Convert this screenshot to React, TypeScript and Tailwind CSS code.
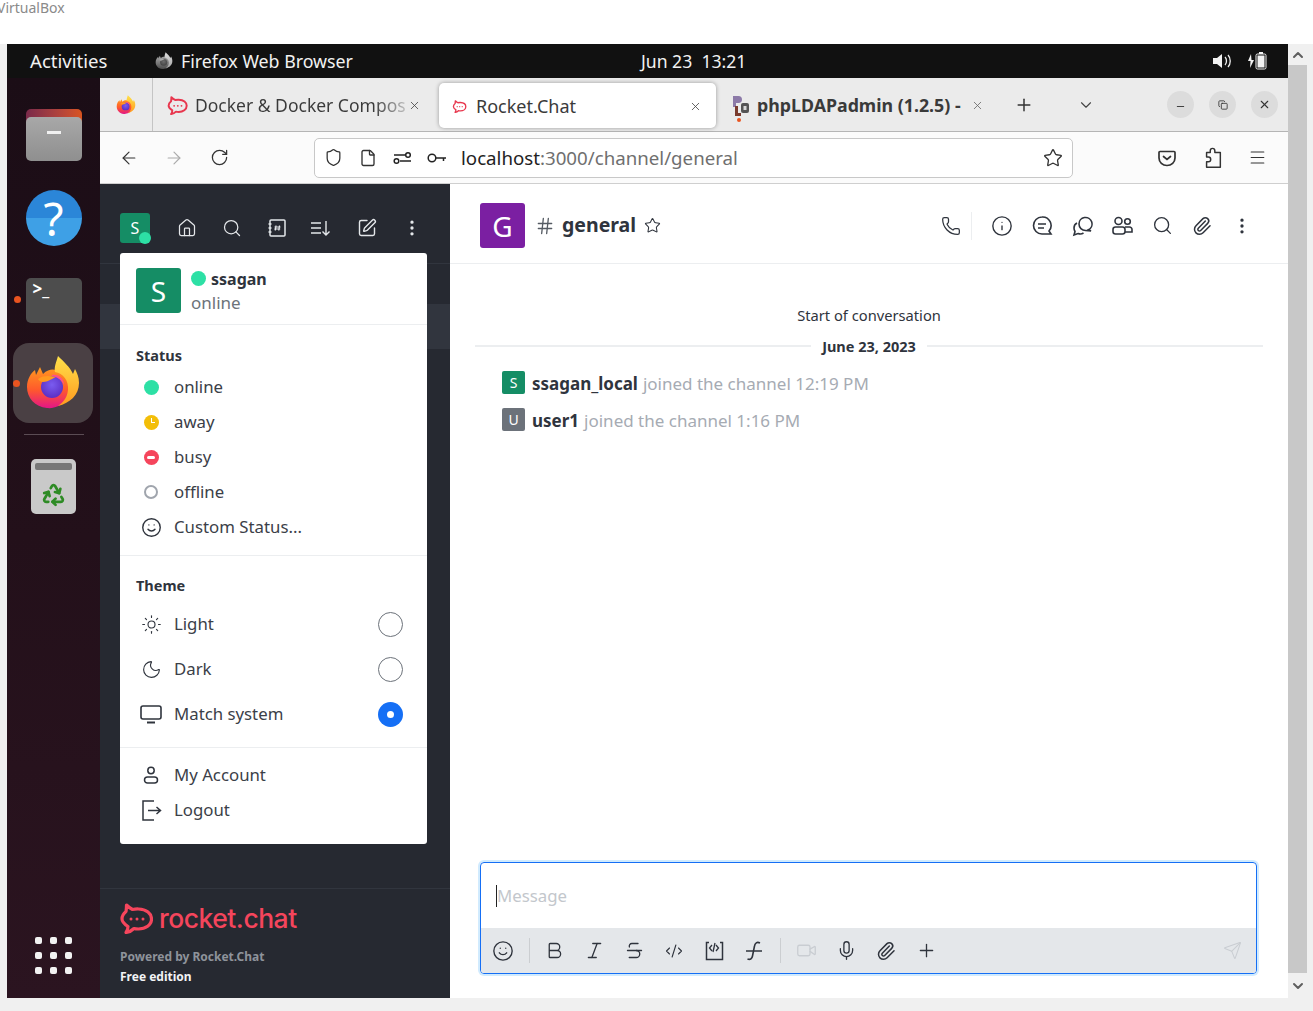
import type { ReactNode } from "react";
import {
  ArrowLeft,
  ArrowRight,
  ChevronDown,
  ChevronUp,
  CodeXml,
  EllipsisVertical,
  House,
  Info,
  Italic,
  Bold,
  Menu,
  Mic,
  Minus,
  Moon,
  Paperclip,
  Phone,
  Plus,
  Recycle,
  RotateCw,
  Search,
  Send,
  Shield,
  Smile,
  SquarePen,
  Star,
  Strikethrough,
  Sun,
  Video,
  X,
  Hash,
  File,
  Copy,
} from "lucide-react";

const Ubuntuish = "font-['Noto_Sans',sans-serif]";

const RocketMark = ({ className }: { className?: string }) => (
  <svg viewBox="1 0 32 31" className={className} fill="none">
    <path
      d="M7 2c2 2 4 3.500 6 4.500 2-.4 4-.6 6-.5 8 .3 13 4.600 13 10 0 6-6 10-13 10-1.500 0-3 0-4.500-.5-2 2-5 3.500-8 4 1.500-2 2-4 2-6-3-2-6-4.500-6-7.500 0-3 1.500-5.500 4-7.500C7 6 7 4 7 2z"
      stroke="currentColor"
      strokeWidth="3.200"
      strokeLinejoin="round"
    />
    <circle cx="11.500" cy="16" r="1.500" fill="currentColor" />
    <circle cx="17.500" cy="16" r="1.500" fill="currentColor" />
    <circle cx="23.500" cy="16" r="1.500" fill="currentColor" />
  </svg>
);

const FirefoxLogo = ({ className }: { className?: string }) => (
  <svg viewBox="0 0 54 56" className={className}>
    <defs>
      <linearGradient id="ffBody" x1="0" y1="0" x2="0" y2="1">
        <stop offset="0" stopColor="#ff9a1f" />
        <stop offset="0.55" stopColor="#ff5a2b" />
        <stop offset="1" stopColor="#e31587" />
      </linearGradient>
      <linearGradient id="ffTop" x1="0" y1="0" x2="0" y2="1">
        <stop offset="0" stopColor="#ffe14a" />
        <stop offset="1" stopColor="#ff9a1f" />
      </linearGradient>
      <radialGradient id="ffGlobe" cx="0.5" cy="0.4" r="0.6">
        <stop offset="0" stopColor="#7a5cf0" />
        <stop offset="1" stopColor="#5b2fc4" />
      </radialGradient>
    </defs>
    <path
      d="M14 12 L17 19 C22 14 27 14 30 15 C44 18 47 30 44 38 C40 50 28 54 21 53 C9 52 1 43 1 32 C1 24 5 18 9 15 L10 20 Z"
      fill="url(#ffBody)"
    />
    <path
      d="M32 1 C30 8 28 12 29 17 C37 18 43 26 42 35 C41 44 36 48 32 51 C44 48 53 40 53 28 C53 22 51 18 49 14 L47 19 C44 12 38 7 32 1 Z"
      fill="url(#ffTop)"
    />
    <circle cx="26" cy="32" r="11" fill="url(#ffGlobe)" />
    <path d="M12 24 C18 20 24 21 30 22 C25 24 22 27 17 27 C15 27 13 26 12 24 Z" fill="#ff9a1f" />
    <path d="M26 20 C33 19 38 24 38 30 C35 24 31 22 26 21 Z" fill="#ff4f8b" />
  </svg>
);

// blurry phpLDAPadmin favicon, it is only a picture of letters in the reference
const PhpLdapFavicon = () => (
  <svg width="18" height="28" viewBox="0 0 18 28">
    <path d="M1 1h5.500a3 3 0 0 1 0 7H4v4H1z" fill="#8c7aa8" />
    <path d="M3 11h3v7h3v3H3z" fill="#7a3b2e" />
    <rect x="9" y="8" width="8" height="10" rx="2" fill="#555555" />
    <rect x="11.500" y="11" width="3" height="4" fill="#d8d8d8" />
    <circle cx="7" cy="25" r="2" fill="#e95420" />
  </svg>
);

const DirectoryIcon = ({ size = 20 }: { size?: number }) => (
  <svg width={size} height={size} viewBox="0 0 20 20" fill="none" stroke="currentColor" strokeWidth="1.500">
    <rect x="3" y="2" width="15" height="16" rx="1" />
    <path d="M1.500 6h3M1.500 10h3M1.500 14h3" />
    <path d="M9 7.500l-.7 5M12.500 7.500l-.7 5M7.500 9h6M7.200 11h6" strokeWidth="1.200" />
  </svg>
);

const SortIcon = () => (
  <svg width="22" height="20" viewBox="0 0 22 20" fill="none" stroke="currentColor" strokeWidth="1.400">
    <path d="M1 5h10M1 10h10M1 15h10" />
    <path d="M16 3v14M12.500 13.500L16 17l3.500-3.500" />
  </svg>
);

const ParamsIcon = () => (
  <svg width="20" height="16" viewBox="0 0 20 16" fill="none" stroke="#222" strokeWidth="1.500">
    <path d="M1 5h11M7 11h11" />
    <circle cx="15" cy="5" r="2.300" />
    <circle cx="3.500" cy="11" r="2.300" />
  </svg>
);

const KeyIcon = () => (
  <svg width="20" height="12" viewBox="0 0 20 12" fill="none" stroke="#222" strokeWidth="1.500">
    <circle cx="5" cy="6" r="3.800" />
    <path d="M9 6h10M16.500 6v3" />
  </svg>
);

const PuzzleIcon = () => (
  <svg width="22" height="24" viewBox="0 0 24 24" fill="none" stroke="#333" strokeWidth="1.600" strokeLinejoin="round">
    <path d="M9 6V4a2.500 2.500 0 0 1 5 0v2h6v16H5v-6h2a2.500 2.500 0 0 0 0-5H5V6z" />
  </svg>
);

const PocketIcon = () => (
  <svg width="20" height="20" viewBox="0 0 20 20" fill="none" stroke="#333" strokeWidth="1.700">
    <path d="M3 3.500h14a1 1 0 0 1 1 1V10a8 7.500 0 0 1-16 0V4.500a1 1 0 0 1 1-1z" />
    <path d="M6.500 8.500L10 11.500l3.500-3" strokeLinecap="round" />
  </svg>
);

const ThreadIcon = () => (
  <svg width="22" height="22" viewBox="0 0 22 22" fill="none" stroke="#2f343d" strokeWidth="1.600">
    <path d="M11 2a8.500 8.500 0 1 0 0 17h9l-2-3a8.500 8.500 0 0 0-7-14z" />
    <path d="M7 9h8M7 13h6" />
  </svg>
);

const DiscussionIcon = () => (
  <svg width="22" height="22" viewBox="0 0 22 22" fill="none" stroke="#2f343d" strokeWidth="1.600">
    <path d="M8 9a6.500 6.500 0 1 1 9.500 5.700L20 16l-5.500-.5A6.500 6.500 0 0 1 8 9z" />
    <path d="M6 8a5.500 5.500 0 0 0-3 5c0 1.500.4 2.500 1 3.500L3 20l4-1.500c2 .8 4 .5 5.500-.5" />
  </svg>
);

const MembersIcon = () => (
  <svg width="22" height="22" viewBox="0 0 22 22" fill="none" stroke="#2f343d" strokeWidth="1.600">
    <circle cx="7.500" cy="6" r="3.500" />
    <circle cx="16.500" cy="6.500" r="2.800" />
    <rect x="2" y="12" width="12" height="7" rx="2.500" />
    <path d="M14 12h4.500a2.500 2.500 0 0 1 2.500 2.500V17h-7" />
  </svg>
);

const CodeBlockIcon = () => (
  <svg width="22" height="22" viewBox="0 0 22 22" fill="none" stroke="#2f343d" strokeWidth="1.500">
    <path d="M6 2.500H3.500v17h16v-17H17" />
    <path d="M9 5L6.500 8 9 11M13 5l2.500 3L13 11M12 3l-2 9" strokeWidth="1.300" />
  </svg>
);

const FormulaIcon = () => (
  <svg width="20" height="22" viewBox="0 0 20 22" fill="none" stroke="#2f343d" strokeWidth="1.600">
    <path d="M16 3c-3-1.500-5 0-5.500 3L8.500 16c-.5 3-2.500 4-5 3" />
    <path d="M2 11h16" />
  </svg>
);

const MonitorIcon = () => (
  <svg width="22" height="22" viewBox="0 0 22 22" fill="none" stroke="#2f343d" strokeWidth="1.600">
    <rect x="1" y="3" width="20" height="13" rx="2" />
    <path d="M7 19.500h8" strokeWidth="2" />
  </svg>
);

const AccountIcon = () => (
  <svg width="20" height="20" viewBox="0 0 20 20" fill="none" stroke="#2f343d" strokeWidth="1.500">
    <circle cx="10" cy="5.500" r="3.200" />
    <rect x="3.500" y="12" width="13" height="6" rx="3" />
  </svg>
);

const LogoutIcon = () => (
  <svg width="21" height="23" viewBox="0 0 21 23" fill="none" stroke="#2f343d" strokeWidth="1.500">
    <path d="M13 2H2v19h11" />
    <path d="M7 11.500h12M15.500 8l4 3.500-4 3.500" />
  </svg>
);

const StatusRow = ({ icon, label }: { icon: ReactNode; label: string }) => (
  <div className="flex h-[35px] items-center pt-[1px]">
    <span className="flex w-[54px] shrink-0 justify-center pl-[8px]">{icon}</span>
    <span className="pt-[1px] text-[16.800px] leading-none text-[#3b4048]">{label}</span>
  </div>
);

const ThemeRow = ({ icon, label, selected }: { icon: ReactNode; label: string; selected?: boolean }) => (
  <div className="flex h-[45px] items-center pr-[24px] pt-[1px]">
    <span className="flex w-[54px] shrink-0 justify-center pl-[8px] text-[#2f343d]">{icon}</span>
    <span className="flex-1 pt-[1px] text-[16.800px] leading-none text-[#3b4048]">{label}</span>
    {selected ? (
      <span className="flex h-[25px] w-[25px] items-center justify-center rounded-full bg-[#156ff5]">
        <span className="h-[7px] w-[7px] rounded-full bg-white" />
      </span>
    ) : (
      <span className="h-[25px] w-[25px] rounded-full border border-[#6c727a]" />
    )}
  </div>
);

const SystemMessage = ({ initial, color, name, time }: { initial: string; color: string; name: string; time: string }) => (
  <div className="flex h-[37px] items-center pl-[52px]">
    <span className={`flex h-[23px] w-[23px] items-center justify-center rounded-[2px] text-[14px] leading-none text-white ${color}`}>
      {initial}
    </span>
    <span className="ml-[7px] pt-[2px] text-[17px] font-bold leading-none text-[#2f343d]">{name}</span>
    <span className="ml-[5px] pt-[2px] text-[17px] leading-none text-[#a6abb3]">joined the channel {time}</span>
  </div>
);

const TopBar = () => (
  <div className="flex h-[34px] items-center bg-[#111111] text-[18px] text-[#f2f2f2]">
    <span className="ml-[23px] w-[125px] text-[18.600px]">Activities</span>
    <FirefoxLogo className="h-[18px] w-[18px] grayscale" />
    <span className="ml-[8px] w-[460px] text-[17.800px]">Firefox Web Browser</span>
    <span className="whitespace-pre text-[17.600px]">Jun 23  13:21</span>
    <span className="ml-auto flex items-center gap-[15px] pr-[21px]">
      <svg width="20" height="18" viewBox="0 0 20 18" fill="#f2f2f2">
        <path d="M1 6h4l5-4v14l-5-4H1z" />
        <path d="M13 5c2 2 2 6 0 8M16 3c3 3 3 9 0 12" stroke="#f2f2f2" strokeWidth="1.300" fill="none" />
      </svg>
      <svg width="20" height="20" viewBox="0 0 20 20" fill="#f2f2f2">
        <path d="M4 3L1 10h2.500L3 17l4-8H4.500z" />
        <rect x="9" y="3" width="10" height="15" rx="1.500" fill="none" stroke="#f2f2f2" />
        <rect x="10.500" y="4.500" width="7" height="12" />
        <rect x="12" y="1" width="4" height="2" />
      </svg>
    </span>
  </div>
);

const Dock = () => (
  <aside className="relative flex w-[93px] shrink-0 flex-col items-center bg-gradient-to-b from-[#1b0d16] via-[#23101a] to-[#2b1420]">
    <div className="relative mt-[31px] h-[52px] w-[56px]">
      <div className="absolute inset-x-0 top-0 h-[28px] rounded-[5px] bg-gradient-to-r from-[#7a2a4a] to-[#d9541e]" />
      <div className="absolute inset-x-0 bottom-0 flex h-[44px] justify-center rounded-[5px] bg-gradient-to-b from-[#a8a8a8] to-[#8f8f8f]">
        <span className="mt-[14px] h-[3px] w-[14px] bg-[#f0f0f0]" />
      </div>
    </div>
    <div className="mt-[29px] flex h-[56px] w-[56px] items-center justify-center rounded-full bg-[linear-gradient(#2b86d8_50%,#3ea0e6_50%)] text-[46px] leading-none text-white">
      ?
    </div>
    <div className="relative mt-[32px] h-[45px] w-[56px] rounded-[5px] bg-[#4d4d4d] pl-[7px] pt-[1px] text-[17px] font-bold leading-[20px] text-white">
      &gt;_
      <span className="absolute left-[-12px] top-[18px] h-[7px] w-[7px] rounded-full bg-[#e95420]" />
    </div>
    <div className="relative -ml-[2px] mt-[20px] flex h-[80px] w-[80px] items-center justify-center rounded-[16px] bg-[#4a4044]">
      <FirefoxLogo className="ml-[1px] h-[56px] w-[54px]" />
      <span className="absolute left-0 top-[37px] h-[7px] w-[7px] rounded-full bg-[#e95420]" />
    </div>
    <div className="mt-[11px] h-px w-[60px] bg-[#5b4c54]" />
    <div className="mt-[24px] flex h-[55px] w-[45px] flex-col items-center rounded-[5px] bg-[#c9c9c9] pt-[4px]">
      <span className="h-[7px] w-[37px] rounded-[2px] bg-[#777777]" />
      <Recycle size={25} className="mt-[12px] text-[#2e8b25]" strokeWidth={2.600} />
    </div>
    <div className="mt-auto mb-[24px] grid grid-cols-3 gap-[8px]">
      {Array.from({ length: 9 }).map((_, i) => (
        <span key={i} className="h-[7px] w-[7px] rounded-[2px] bg-[#f2f2f2]" />
      ))}
    </div>
  </aside>
);

const TabBar = () => (
  <div className="flex h-[54px] items-stretch border-b border-[#b5b5b5] bg-[#ebebeb]">
    <div className="flex w-[53px] items-center justify-center border-r border-[#c4c4c4]">
      <FirefoxLogo className="h-[20px] w-[20px]" />
    </div>
    <div className="flex w-[286px] items-center pl-[14px] pt-[2px]">
      <RocketMark className="h-[19px] w-[21px] text-[#e8374e]" />
      <span className="ml-[7px] w-[210px] whitespace-nowrap bg-gradient-to-r from-[#3a3a3a] from-[85%] to-[#bdbdbd] bg-clip-text text-[17.500px] text-transparent">
        Docker &amp; Docker Compos
      </span>
      <X size={13} className="ml-[3px] text-[#444]" strokeWidth={1.500} />
    </div>
    <div className="mt-[5px] flex h-[45px] w-[277px] items-center rounded-[5px] bg-white pl-[13px] pr-[14px] pt-[1px] text-[18px] text-[#3a3a3a] shadow-[0_0_4px_rgba(0,0,0,0.35)]">
      <RocketMark className="h-[13px] w-[15px] text-[#e8374e]" />
      <span className="ml-[9px] flex-1">Rocket.Chat</span>
      <X size={13} className="text-[#444]" strokeWidth={1.500} />
    </div>
    <div className="flex w-[286px] items-center pl-[16px] pt-[2px] text-[#3a3a3a]">
      <span className="mt-[6px] h-[28px]">
        <PhpLdapFavicon />
      </span>
      <span className="ml-[7px] w-[205px] whitespace-nowrap text-[17.800px] font-bold">phpLDAPadmin (1.2.5) -</span>
      <X size={13} className="ml-[9px] text-[#666]" strokeWidth={1.500} />
    </div>
    <div className="flex w-[43px] items-center justify-center">
      <Plus size={20} className="text-[#333]" strokeWidth={1.800} />
    </div>
    <div className="ml-[20px] flex w-[42px] items-center justify-center">
      <ChevronDown size={18} className="text-[#444]" strokeWidth={1.500} />
    </div>
    <div className="ml-[60px] flex items-center gap-[15px]">
      <span className="flex h-[27px] w-[27px] items-center justify-center rounded-full bg-[#dcdcdc]">
        <Minus size={11} className="mt-[4px] text-[#333]" />
      </span>
      <span className="flex h-[27px] w-[27px] items-center justify-center rounded-full bg-[#dcdcdc]">
        <Copy size={10} className="text-[#333]" />
      </span>
      <span className="flex h-[27px] w-[27px] items-center justify-center rounded-full bg-[#dcdcdc]">
        <X size={13} className="text-[#333]" />
      </span>
    </div>
  </div>
);

const NavBar = () => (
  <div className="flex h-[52px] items-center border-b border-[#cfcfcf] bg-[#fbfbfb] text-[#333]">
    <ArrowLeft size={20} className="ml-[19px]" strokeWidth={1.400} />
    <ArrowRight size={20} className="ml-[25px] text-[#aaa]" strokeWidth={1.400} />
    <RotateCw size={19} className="ml-[26px]" strokeWidth={1.600} />
    <div className="ml-[85px] flex h-[40px] w-[759px] items-center rounded-[5px] border border-[#c8c8c8] bg-white pl-[9px] pr-[9px]">
      <Shield size={19} strokeWidth={1.600} />
      <File size={18} className="ml-[16px]" strokeWidth={1.800} />
      <span className="ml-[16px]">
        <ParamsIcon />
      </span>
      <span className="ml-[14px]">
        <KeyIcon />
      </span>
      <span className="ml-[14px] pt-[1px] text-[18.700px] leading-none text-[#222]">
        localhost<span className="text-[#6f6f6f]">:3000/channel/general</span>
      </span>
      <Star size={20} className="ml-auto" strokeWidth={1.600} />
    </div>
    <span className="ml-[84px]">
      <PocketIcon />
    </span>
    <span className="ml-[25px]">
      <PuzzleIcon />
    </span>
    <Menu size={19} className="ml-[24px]" strokeWidth={1.300} />
  </div>
);

const UserPopover = () => (
  <div className="absolute left-[20px] top-[69px] h-[591px] w-[307px] rounded-[3px] bg-white">
    <div className="flex h-[72px] items-start border-b border-[#eceef0] pl-[16px] pt-[15px]">
      <span className="flex h-[45px] w-[45px] items-center justify-center rounded-[3px] bg-[#158d65] text-[28px] leading-none text-white">
        S
      </span>
      <div className="ml-[10px]">
        <div className="flex h-[21px] items-center">
          <span className="h-[15px] w-[15px] rounded-full bg-[#2de0a5]" />
          <span className="ml-[5px] text-[16px] font-bold leading-none text-[#2f343d]">ssagan</span>
        </div>
        <div className="mt-[5px] text-[17px] leading-none text-[#6c737a]">online</div>
      </div>
    </div>
    <div className="h-[231px] border-b border-[#eceef0] pt-[23px]">
      <div className="h-[21px] pl-[16px] text-[14.500px] font-bold leading-none text-[#2f343d]">Status</div>
      <StatusRow icon={<span className="h-[15px] w-[15px] rounded-full bg-[#2de0a5]" />} label="online" />
      <StatusRow
        icon={
          <span className="relative h-[15px] w-[15px] rounded-full bg-[#f3be08]">
            <span className="absolute left-[7px] top-[3px] h-[5px] w-[4px] rounded-bl-[1px] border-b-[1.500px] border-l-[1.500px] border-white" />
          </span>
        }
        label="away"
      />
      <StatusRow
        icon={
          <span className="flex h-[15px] w-[15px] items-center justify-center rounded-full bg-[#f5455c]">
            <span className="h-[3px] w-[8px] rounded-full bg-white" />
          </span>
        }
        label="busy"
      />
      <StatusRow icon={<span className="h-[14px] w-[14px] rounded-full border-2 border-[#a0a5ad]" />} label="offline" />
      <StatusRow icon={<Smile size={21} strokeWidth={1.600} className="text-[#2f343d]" />} label="Custom Status..." />
    </div>
    <div className="h-[192px] border-b border-[#eceef0] pt-[22px]">
      <div className="h-[23px] pl-[16px] text-[14.500px] font-bold leading-none text-[#2f343d]">Theme</div>
      <ThemeRow icon={<Sun size={21} strokeWidth={1.300} />} label="Light" />
      <ThemeRow icon={<Moon size={21} strokeWidth={1.300} />} label="Dark" />
      <ThemeRow icon={<MonitorIcon />} label="Match system" selected />
    </div>
    <div className="pt-[9px]">
      <StatusRow icon={<AccountIcon />} label="My Account" />
      <StatusRow icon={<LogoutIcon />} label="Logout" />
    </div>
  </div>
);

const Sidebar = () => (
  <aside className="relative flex w-[350px] shrink-0 flex-col bg-[#262931]">
    <div className="flex h-[80px] items-center border-b border-[#31353e] pl-[20px] pt-[8px] text-[#e4e7ea]">
      <span className="relative flex h-[30px] w-[30px] items-center justify-center rounded-[3px] bg-[#158d65] text-[16px] leading-none text-white">
        S
        <span className="absolute bottom-[-1px] right-[-1px] h-[12px] w-[12px] rounded-full bg-[#2de0a5]" />
      </span>
      <House size={20} className="ml-[27px]" strokeWidth={1.500} />
      <Search size={20} className="ml-[25px]" strokeWidth={1.500} />
      <span className="ml-[25px]">
        <DirectoryIcon />
      </span>
      <span className="ml-[23px]">
        <SortIcon />
      </span>
      <SquarePen size={20} className="ml-[25px]" strokeWidth={1.700} />
      <EllipsisVertical size={20} className="ml-[25px]" strokeWidth={2} />
    </div>
    <div className="mt-[40px] h-[45px] bg-[#31353e]" />
    <UserPopover />
    <div className="mt-auto h-[110px] border-t border-[#31353e] pl-[20px] pt-[13px]">
      <div className="flex h-[32px] items-center">
        <RocketMark className="h-[31px] w-[33px] text-[#f5455c]" />
        <span className="ml-[6px] font-['Inter',sans-serif] text-[26.500px] font-medium leading-none tracking-[-0.5px] text-[#f5455c]">
          rocket.chat
        </span>
      </div>
      <div className="mt-[13px] text-[12px] font-bold leading-[20px] text-[#8e939b]">Powered by Rocket.Chat</div>
      <div className="text-[12px] font-bold leading-[20px] text-[#f2f3f5]">Free edition</div>
    </div>
  </aside>
);

const ChatHeader = () => (
  <header className="flex h-[80px] items-center border-b border-[#eceef0] pl-[30px] pr-[26px] pt-[4px] text-[#2f343d]">
    <span className="flex h-[45px] w-[45px] items-center justify-center rounded-[3px] bg-[#7b1fa2] text-[28px] leading-none text-white">
      G
    </span>
    <Hash size={20} className="ml-[10px] text-[#555b63]" strokeWidth={1.600} />
    <span className="-mt-[2px] ml-[7px] text-[19.500px] font-bold leading-none">general</span>
    <Star size={17} className="ml-[8px]" strokeWidth={1.500} />
    <div className="ml-auto flex items-center">
      <Phone size={20} strokeWidth={1.500} />
      <span className="mx-[10px] h-[28px] w-px bg-[#eceef0]" />
      <span className="flex w-[40px] justify-center">
        <Info size={22} strokeWidth={1.500} />
      </span>
      <span className="flex w-[40px] justify-center">
        <ThreadIcon />
      </span>
      <span className="flex w-[40px] justify-center">
        <DiscussionIcon />
      </span>
      <span className="flex w-[40px] justify-center">
        <MembersIcon />
      </span>
      <span className="flex w-[40px] justify-center">
        <Search size={21} strokeWidth={1.500} />
      </span>
      <span className="flex w-[40px] justify-center">
        <Paperclip size={20} strokeWidth={1.800} />
      </span>
      <span className="flex w-[40px] justify-center">
        <EllipsisVertical size={20} strokeWidth={2} />
      </span>
    </div>
  </header>
);

const Composer = () => (
  <div className="mb-[24px] ml-[30px] mr-[31px] mt-auto h-[112px] overflow-hidden rounded-[4px] border border-[#156ff5] shadow-[0_0_0_2px_#d1ebfe]">
    <div className="flex h-[65px] items-center pl-[15px]">
      <span className="h-[22px] w-px bg-[#222]" />
      <span className="pt-[2px] text-[16.800px] leading-none text-[#c3c7cc]">Message</span>
    </div>
    <div className="flex h-[45px] items-center bg-[#e4e7ea] text-[#2f343d]">
      <span className="flex w-[44px] justify-center">
        <Smile size={22} strokeWidth={1.500} />
      </span>
      <span className="ml-[4px] h-[25px] w-px bg-[#cbced1]" />
      <span className="ml-[4px] flex w-[40px] justify-center">
        <Bold size={21} strokeWidth={1.500} />
      </span>
      <span className="flex w-[40px] justify-center">
        <Italic size={21} strokeWidth={1.500} />
      </span>
      <span className="flex w-[40px] justify-center">
        <Strikethrough size={21} strokeWidth={1.500} />
      </span>
      <span className="flex w-[40px] justify-center">
        <CodeXml size={18} strokeWidth={1.500} />
      </span>
      <span className="flex w-[40px] justify-center">
        <CodeBlockIcon />
      </span>
      <span className="flex w-[40px] justify-center">
        <FormulaIcon />
      </span>
      <span className="ml-[6px] h-[25px] w-px bg-[#cbced1]" />
      <span className="ml-[5px] flex w-[40px] justify-center text-[#c9cdd2]">
        <Video size={21} strokeWidth={1.500} />
      </span>
      <span className="flex w-[40px] justify-center">
        <Mic size={21} strokeWidth={1.500} />
      </span>
      <span className="flex w-[40px] justify-center">
        <Paperclip size={20} strokeWidth={1.800} />
      </span>
      <span className="flex w-[40px] justify-center">
        <Plus size={21} strokeWidth={1.500} />
      </span>
      <Send size={19} className="ml-auto mr-[14px] text-[#c9cdd2]" strokeWidth={1.300} />
    </div>
  </div>
);

const ChatPanel = () => (
  <main className="flex min-w-0 flex-1 flex-col bg-white">
    <ChatHeader />
    <div className="pt-[44px] text-center text-[14.700px] leading-none text-[#2f343d]">Start of conversation</div>
    <div className="mx-[25px] mt-[16px] flex items-center">
      <span className="h-[2px] flex-1 bg-[#eceef0]" />
      <span className="px-[11px] text-[14.500px] font-bold leading-none text-[#2f343d]">June 23, 2023</span>
      <span className="h-[2px] flex-1 bg-[#eceef0]" />
    </div>
    <div className="mt-[11px]">
      <SystemMessage initial="S" color="bg-[#158d65]" name="ssagan_local" time="12:19 PM" />
      <SystemMessage initial="U" color="bg-[#6c727a]" name="user1" time="1:16 PM" />
    </div>
    <Composer />
  </main>
);

const Scrollbar = () => (
  <div className="flex w-[25px] shrink-0 flex-col bg-[#f0f0f0] pr-[6px]">
    <div className="flex h-[21px] items-center justify-center text-[#5f5f5f]">
      <ChevronUp size={16} strokeWidth={3} />
    </div>
    <div className="h-[908px] bg-[#c8c8c8]" />
    <div className="flex h-[25px] items-center justify-center text-[#5f5f5f]">
      <ChevronDown size={16} strokeWidth={3} />
    </div>
  </div>
);

export default function App() {
  return (
    <div className={`flex h-[1011px] w-[1313px] flex-col overflow-hidden bg-[#f0f0f0] ${Ubuntuish}`}>
      <div className="h-[44px] shrink-0 bg-white">
        <span className="-ml-[3px] block text-[14px] leading-[16px] text-[#8a8a8a]">VirtualBox</span>
      </div>
      <div className="flex h-[954px] pl-[7px]">
        <div className="flex w-[1281px] flex-col">
          <TopBar />
          <div className="flex min-h-0 flex-1">
            <Dock />
            <div className="flex min-w-0 flex-1 flex-col">
              <TabBar />
              <NavBar />
              <div className="flex min-h-0 flex-1">
                <Sidebar />
                <ChatPanel />
              </div>
            </div>
          </div>
        </div>
        <Scrollbar />
      </div>
    </div>
  );
}
